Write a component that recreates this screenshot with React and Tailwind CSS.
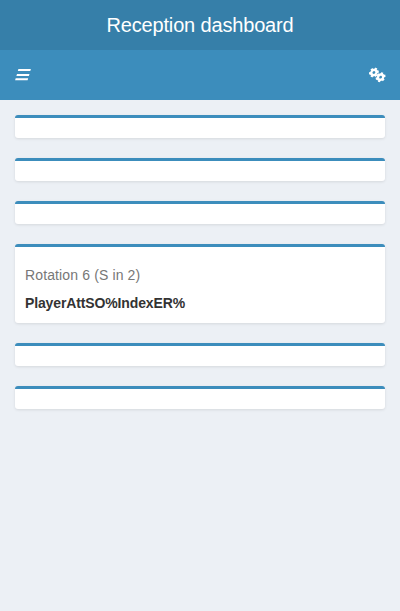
function MenuIcon() {
  return (
    <svg width="17" height="14" viewBox="0 0 17 14" fill="#fff">
      <path d="M3.4 1h12.5l-.6 2H2.8zM2 6h12.5l-.6 2H1.4zM.7 10.2h12.5l-.6 2H.1z" />
    </svg>
  );
}

function Gear({ x, y, turn }) {
  return (
    <g transform={`translate(${x} ${y}) skewX(-10) rotate(${turn})`}>
      <circle r="2.6" fill="none" stroke="#fff" strokeWidth="2.4" />
      {[0, 60, 120, 180, 240, 300].map((angle) => (
        <rect key={angle} x="-1.15" y="-4.8" width="2.3" height="1.8" fill="#fff" transform={`rotate(${angle})`} />
      ))}
    </g>
  );
}

function GearsIcon() {
  return (
    <svg width="18" height="16" viewBox="0 0 18 16">
      <Gear x={5.9} y={5.5} turn={20} />
      <Gear x={12.6} y={10.2} turn={10} />
    </svg>
  );
}

function Box({ children }) {
  return (
    <section className="mb-5 min-h-[23px] rounded-[3px] border-t-[3px] border-[#3c8dbc] bg-white shadow-[0_1px_3px_rgba(0,0,0,0.1)]">
      {children}
    </section>
  );
}

export default function App() {
  return (
    <div className="min-h-screen bg-[#ecf0f5] font-['Liberation_Sans',Arial,sans-serif]">
      <header>
        <h1 className="h-[50px] bg-[#367fa9] text-center text-[20px] leading-[50px] tracking-[-0.16px] text-white">Reception dashboard</h1>
        <nav className="flex h-[50px] items-center justify-between bg-[#3c8dbc] pr-[14px] pl-[15px]">
          <button aria-label="Menu"><MenuIcon /></button>
          <button aria-label="Settings"><GearsIcon /></button>
        </nav>
      </header>
      <main className="p-[15px]">
        <Box />
        <Box />
        <Box />
        <Box>
          <div className="h-[76px] px-[10px] pt-[18px] text-[14px] leading-5">
            <p className="tracking-[0.13px] text-[#777777]">Rotation 6 (S in 2)</p>
            <p className="mt-2 font-bold tracking-[-0.13px] text-[#333333]">PlayerAttSO%IndexER%</p>
          </div>
        </Box>
        <Box />
        <Box />
      </main>
    </div>
  );
}
